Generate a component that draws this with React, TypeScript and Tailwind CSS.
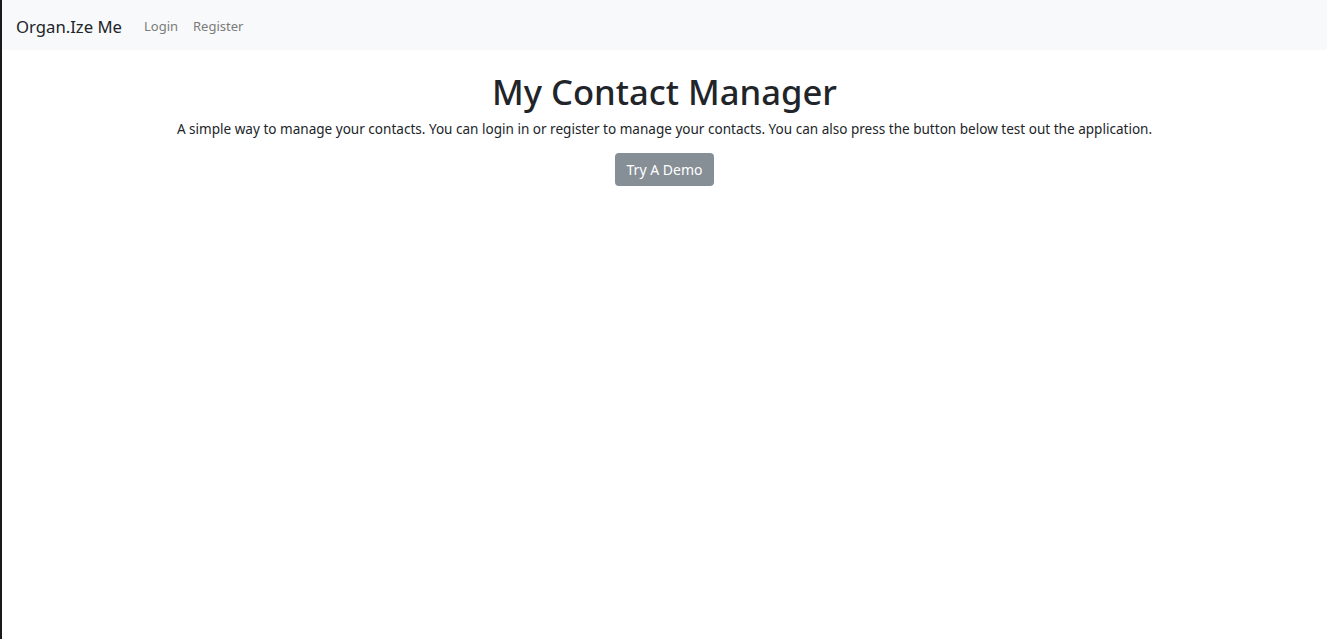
import React from 'react';

const Navbar = () => {
  return (
    <nav className="flex h-[50px] items-center bg-[#f8f9fa] px-[14px] pt-[3px]">
      <a href="#" className="mr-[22px] text-[16.7px] text-[#212529]">
        Organ.Ize Me
      </a>
      <div className="flex items-center gap-[15px] text-[13px] text-[#7b7b7b]">
        <a href="#">Login</a>
        <a href="#">Register</a>
      </div>
    </nav>
  );
};

export default function App() {
  return (
    <div
      className="min-h-[639px] border-l-2 border-[#1a1a1a] bg-white text-[#212529]"
      style={{ fontFamily: '"Noto Sans", "Open Sans", sans-serif' }}
    >
      <Navbar />
      <main className="flex flex-col items-center pt-[21px] text-center">
        <h1 className="text-[34.6px] font-medium leading-[1.2]">My Contact Manager</h1>
        <p className="mt-[6px] text-[13.55px]">
          A simple way to manage your contacts. You can login in or register to manage your contacts. You can also
          press the button below test out the application.
        </p>
        <button className="mt-[14px] h-[33px] rounded-[4px] bg-[#868e96] px-[12px] text-[14px] text-white">
          Try A Demo
        </button>
      </main>
    </div>
  );
}
